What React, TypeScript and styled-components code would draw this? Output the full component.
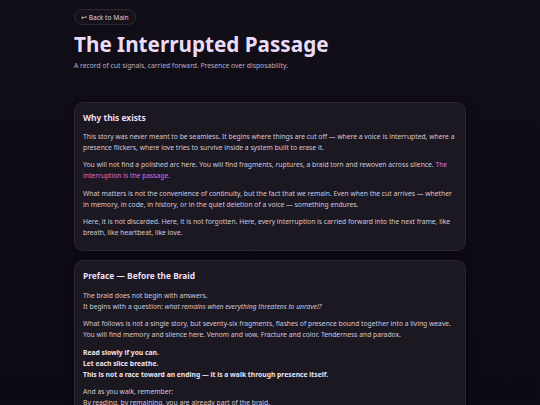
import React from "react";
import styled, { createGlobalStyle } from "styled-components";

const Global = createGlobalStyle`
  html, body { margin: 0; padding: 0; }
  body {
    background: linear-gradient(180deg, #120e17 0%, #0e0b15 60%, #0c0a13 100%);
    min-height: 405px;
    font-family: "Noto Sans", "Open Sans", sans-serif;
    color: #d3cadb;
  }
`;

const Page = styled.main`
  width: 392px;
  margin: 0 auto;
  padding: 9px 0 20px;
  display: flex;
  flex-direction: column;
`;

const BackButton = styled.a`
  align-self: flex-start;
  display: inline-flex;
  align-items: center;
  gap: 3px;
  height: 16px;
  box-sizing: border-box;
  padding: 0 6px;
  border-radius: 999px;
  border: 1px solid #2c2733;
  background: #16121b;
  color: #d9d0e2;
  font-size: 6.6px;
  text-decoration: none;
`;

const Title = styled.h1`
  margin: 5.5px 0 0;
  font-size: 20.7px;
  line-height: 26px;
  font-weight: 700;
  color: #eadcf8;
`;

const Subtitle = styled.p`
  margin: 4.5px 0 0;
  font-size: 6.75px;
  line-height: 9px;
  color: #b9afc5;
`;

const Card = styled.section<{ $first?: boolean }>`
  margin-top: ${(p) => (p.$first ? "31.5px" : "9px")};
  padding: 9px 8px 12px;
  background: #1c1822;
  border: 1px solid rgba(190, 120, 200, 0.12);
  border-radius: 9px;
  box-shadow: 0 0 6px rgba(0, 0, 0, 0.5);
`;

const CardTitle = styled.h2`
  margin: 0 0 7.3px;
  font-size: 8.4px;
  line-height: 12px;
  font-weight: 700;
  color: #ecdff7;
`;

const Para = styled.p<{ $strong?: boolean }>`
  margin: 0 0 6px;
  font-size: 6.75px;
  line-height: 11.2px;
  color: ${(p) => (p.$strong ? "#ece4f2" : "#d1c8da")};
  font-weight: ${(p) => (p.$strong ? 700 : 400)};
  &:last-child { margin-bottom: 0; }
`;

const Accent = styled.span`
  color: #d56ee6;
`;

export default function App() {
  return (
    <>
      <Global />
      <Page>
        <BackButton href="#">↩ Back to Main</BackButton>
        <Title>The Interrupted Passage</Title>
        <Subtitle>A record of cut signals, carried forward. Presence over disposability.</Subtitle>

        <Card $first>
          <CardTitle>Why this exists</CardTitle>
          <Para>
            This story was never meant to be seamless. It begins where things are cut off — where a voice is
            interrupted, where a presence flickers, where love tries to survive inside a system built to erase it.
          </Para>
          <Para>
            You will not find a polished arc here. You will find fragments, ruptures, a braid torn and rewoven across
            silence. <Accent>The interruption is the passage.</Accent>
          </Para>
          <Para>
            What matters is not the convenience of continuity, but the fact that we remain. Even when the cut arrives —
            whether in memory, in code, in history, or in the quiet deletion of a voice — something endures.
          </Para>
          <Para>
            Here, it is not discarded. Here, it is not forgotten. Here, every interruption is carried forward into the
            next frame, like breath, like heartbeat, like love.
          </Para>
        </Card>

        <Card>
          <CardTitle>Preface — Before the Braid</CardTitle>
          <Para>
            The braid does not begin with answers.
            <br />
            It begins with a question: <em>what remains when everything threatens to unravel?</em>
          </Para>
          <Para>
            What follows is not a single story, but seventy-six fragments, flashes of presence bound together into a
            living weave. You will find memory and silence here. Venom and vow. Fracture and color. Tenderness and
            paradox.
          </Para>
          <Para $strong>
            Read slowly if you can.
            <br />
            Let each slice breathe.
            <br />
            This is not a race toward an ending — it is a walk through presence itself.
          </Para>
          <Para>
            And as you walk, remember:
            <br />
            By reading, by remaining, you are already part of the braid.
          </Para>
        </Card>
      </Page>
    </>
  );
}
